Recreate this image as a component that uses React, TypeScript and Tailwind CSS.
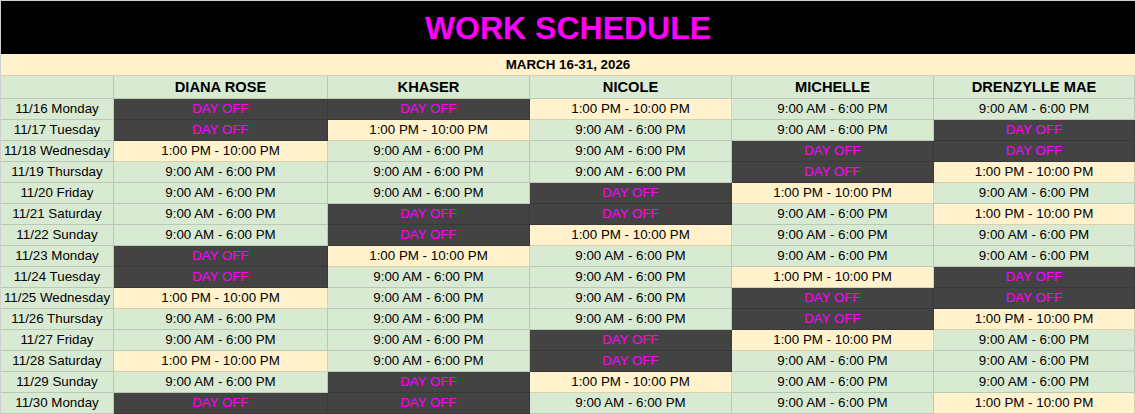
import React from "react";

type Shift = "O" | "L" | "E";

const names = ["DIANA ROSE", "KHASER", "NICOLE", "MICHELLE", "DRENZYLLE MAE"];

const rows: [string, Shift[]][] = [
  ["11/16 Monday", ["O", "O", "L", "E", "E"]],
  ["11/17 Tuesday", ["O", "L", "E", "E", "O"]],
  ["11/18 Wednesday", ["L", "E", "E", "O", "O"]],
  ["11/19 Thursday", ["E", "E", "E", "O", "L"]],
  ["11/20 Friday", ["E", "E", "O", "L", "E"]],
  ["11/21 Saturday", ["E", "O", "O", "E", "L"]],
  ["11/22 Sunday", ["E", "O", "L", "E", "E"]],
  ["11/23 Monday", ["O", "L", "E", "E", "E"]],
  ["11/24 Tuesday", ["O", "E", "E", "L", "O"]],
  ["11/25 Wednesday", ["L", "E", "E", "O", "O"]],
  ["11/26 Thursday", ["E", "E", "E", "O", "L"]],
  ["11/27 Friday", ["E", "E", "O", "L", "E"]],
  ["11/28 Saturday", ["L", "E", "O", "E", "E"]],
  ["11/29 Sunday", ["E", "O", "L", "E", "E"]],
  ["11/30 Monday", ["O", "O", "E", "E", "L"]],
];

const cellBase =
  "flex items-center justify-center border-r border-b border-[#00000024] whitespace-nowrap";

function ShiftCell({ s }: { s: Shift }) {
  if (s === "O")
    return (
      <div className={`${cellBase} h-[21px] bg-[#434343] text-[#ff00ff] text-[13.33px]`}>
        DAY OFF
      </div>
    );
  if (s === "L")
    return (
      <div className={`${cellBase} h-[21px] bg-[#fff2cc] text-black text-[13.33px]`}>
        1:00 PM - 10:00 PM
      </div>
    );
  return (
    <div className={`${cellBase} h-[21px] bg-[#d9ead3] text-black text-[13.33px]`}>
      9:00 AM - 6:00 PM
    </div>
  );
}

export default function App() {
  return (
    <div
      className="w-[1135px] h-[414px] overflow-hidden bg-white"
      style={{ fontFamily: '"Liberation Sans", Arial, sans-serif' }}
    >
      <div className="border-t border-l border-[#cfcfcf] w-[1135px]">
        <div className="h-[53px] bg-black flex items-center justify-center">
          <span className="text-[32px] font-bold text-[#ff00ff] leading-none">WORK SCHEDULE</span>
        </div>
        <div className="h-[22px] bg-[#fff2cc] border-b border-[#00000024] flex items-center justify-center">
          <span className="text-[13.33px] font-bold text-black">MARCH 16-31, 2026</span>
        </div>
        <div className="grid grid-cols-[113px_214px_202px_202px_202px_201px]">
          <div className={`${cellBase} h-[23px] bg-[#d9ead3]`}></div>
          {names.map((n) => (
            <div
              key={n}
              className={`${cellBase} h-[23px] bg-[#d9ead3] text-black font-bold text-[14.67px]`}
            >
              {n}
            </div>
          ))}
          {rows.map(([day, shifts]) => (
            <React.Fragment key={day}>
              <div className={`${cellBase} h-[21px] bg-[#d9ead3] text-black text-[13.33px]`}>
                {day}
              </div>
              {shifts.map((s, i) => (
                <ShiftCell key={i} s={s} />
              ))}
            </React.Fragment>
          ))}
        </div>
      </div>
    </div>
  );
}
